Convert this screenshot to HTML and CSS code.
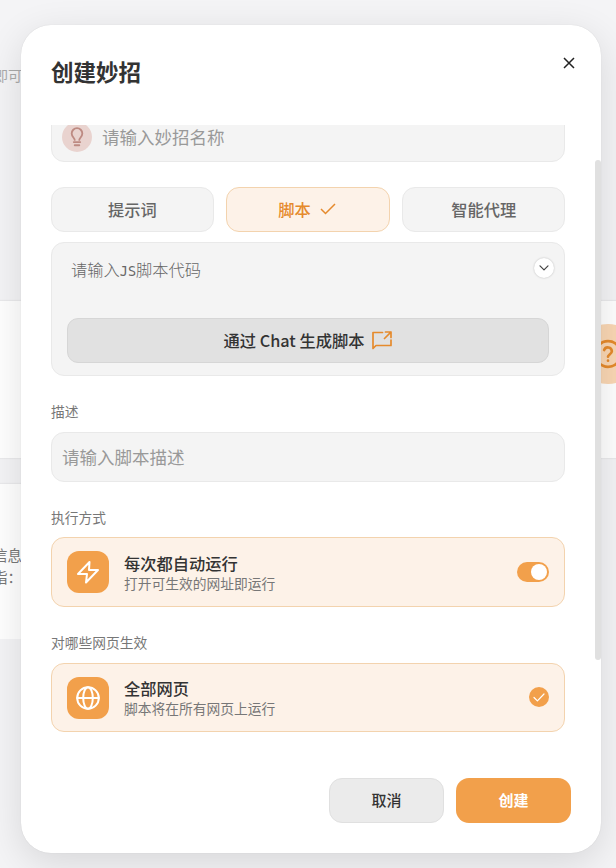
FILE: index.html
```html
<!DOCTYPE html>
<html lang="zh-CN">
<head>
    <meta charset="UTF-8">
    <meta name="viewport" content="width=device-width, initial-scale=1.0">
    <title>创建妙招</title>
    <link rel="stylesheet" href="styles.css">
</head>
<body>

    <!-- page behind the dialog -->
    <div class="page">
        <p class="page-intro">即可</p>
        <div class="page-columns">
            <div class="page-column">
                <div class="page-card"></div>
                <div class="page-card page-card-text">
                    <p>信息</p>
                    <p>指：</p>
                </div>
            </div>
            <div class="page-column">
                <div class="page-card page-card-help">
                    <span class="help-icon">
                        <svg width="32" height="32" viewBox="0 0 24 24"><circle cx="12" cy="12" r="9.600"/><path d="M9.100 9a3 3 0 0 1 5.800 1c0 2-2.900 2.600-2.900 4"/><path d="M12 17h.01"/></svg>
                    </span>
                </div>
            </div>
        </div>
    </div>

    <div class="modal">
        <div class="modal-header">
            <h1>创建妙招</h1>
            <button class="close">
                <svg width="12" height="12" viewBox="0 0 12 12"><path d="M1 1l10 10M11 1L1 11"/></svg>
            </button>
        </div>

        <div class="modal-body">
            <div class="field field-name">
                <span class="bulb">
                    <svg width="22" height="22" viewBox="0 0 24 24"><path d="M9.500 15.200c0-2-3.300-3.200-3.300-7A5.800 5.800 0 0 1 17.800 8.200c0 3.800-3.300 5-3.300 7"/><path d="M8.500 17.500h7M9.500 21h5"/></svg>
                </span>
                <span>请输入妙招名称</span>
            </div>

            <div class="tabs">
                <button class="tab">提示词</button>
                <button class="tab active">脚本
                    <svg width="16" height="12" viewBox="0 0 16 12"><path d="M1 6l4.500 4.500L15 1"/></svg>
                </button>
                <button class="tab">智能代理</button>
            </div>

            <div class="script-box">
                <div class="script-top">
                    <span class="script-placeholder">请输入<code>JS</code>脚本代码</span>
                    <button class="expand">
                        <svg width="10" height="6" viewBox="0 0 10 6"><path d="M1 .8l4 4 4-4"/></svg>
                    </button>
                </div>
                <button class="chat-button">通过 Chat 生成脚本
                    <svg width="20" height="19" viewBox="0 0 20 19"><path d="M10.500 1.500H1v16l3-3h15V9"/><path d="M13.500 1H19v5.500M19 1l-6.500 6.500"/></svg>
                </button>
            </div>

            <p class="label label-desc">描述</p>
            <div class="field">请输入脚本描述</div>

            <p class="label">执行方式</p>
            <div class="option option-run">
                <span class="option-icon">
                    <svg width="24" height="24" viewBox="0 0 24 24"><path d="M13.500 2L2 14h9l-1 8.500L22 10h-9z"/></svg>
                </span>
                <div class="option-text">
                    <h3>每次都自动运行</h3>
                    <p>打开可生效的网址即运行</p>
                </div>
                <span class="switch"></span>
            </div>

            <p class="label label-pages">对哪些网页生效</p>
            <div class="option">
                <span class="option-icon">
                    <svg width="24" height="24" viewBox="0 0 24 24"><circle cx="12" cy="12" r="10.800"/><ellipse cx="12" cy="12" rx="4.800" ry="10.800"/><path d="M1.200 12h21.600"/></svg>
                </span>
                <div class="option-text">
                    <h3>全部网页</h3>
                    <p>脚本将在所有网页上运行</p>
                </div>
                <span class="checked">
                    <svg width="12" height="9" viewBox="0 0 12 9"><path d="M1 4.500l3.400 3.400L11 1"/></svg>
                </span>
            </div>
        </div>

        <div class="modal-footer">
            <button class="cancel">取消</button>
            <button class="create">创建</button>
        </div>

        <div class="scrollbar"></div>
    </div>

</body>
</html>
```
FILE: styles.css
```css
* {
    padding: 0;
    margin: 0;
    box-sizing: border-box;
}

body {
    width: 616px;
    height: 868px;
    overflow: hidden;
    position: relative;
    background-color: #f4f4f6;
    color: #333;
    font-family: "Noto Sans CJK SC", sans-serif;
}

button {
    font-family: inherit;
    cursor: pointer;
}

svg {
    display: block;
    flex-shrink: 0;
    fill: none;
    stroke: currentColor;
    stroke-width: 2;
    stroke-linecap: round;
    stroke-linejoin: round;
}

/* background page */
.page {
    padding-top: 65px;
    overflow: hidden;
}

.page-intro {
    height: 236px;
    margin-left: -6px;
    font-size: 14px;
    line-height: 20px;
    color: #aaa;
}

.page-columns {
    display: flex;
    gap: 20px;
    margin: 0 -60px;
}

.page-column {
    flex: 1;
    display: flex;
    flex-direction: column;
    gap: 26px;
}

.page-card {
    height: 157px;
    background-color: #fff;
    box-shadow: 0 0 2px rgba(0, 0, 0, 0.12);
}

.page-card-text {
    height: 155px;
    padding: 60px 0 0 53px;
    font-size: 14.5px;
    line-height: 22px;
    color: #777;
}

.page-card-help {
    display: flex;
    justify-content: flex-end;
    padding: 23px 38px 0 0;
}

.help-icon {
    width: 60px;
    height: 60px;
    border-radius: 50%;
    display: flex;
    align-items: center;
    justify-content: center;
    background-color: #fad7b4;
    color: #e58a2c;
}

/* dialog */
.modal {
    position: absolute;
    top: 25px;
    left: 21px;
    width: 580px;
    height: 828px;
    border-radius: 30px;
    background-color: #fff;
    box-shadow: 0 0 1px rgba(0, 0, 0, 0.15), 0 10px 38px rgba(0, 0, 0, 0.12);
    display: flex;
    flex-direction: column;
}

.modal-header {
    height: 100px;
    flex-shrink: 0;
    padding: 29px 26px 0 30px;
    display: flex;
    justify-content: space-between;
    align-items: flex-start;
}

.modal-header h1 {
    font-size: 22.5px;
    line-height: 35px;
    font-weight: 700;
}

.close {
    margin-top: 3px;
    border: none;
    background: none;
    color: #222;
}

.close svg {
    stroke-width: 1.5;
    stroke-linecap: butt;
}

.modal-body {
    height: 608px;
    flex-shrink: 0;
    padding: 0 36px 0 30px;
    overflow: hidden;
}

.field {
    height: 50px;
    border: 1px solid #e9e9e9;
    border-radius: 13px;
    background-color: #f4f4f4;
    padding: 0 10px 2px;
    display: flex;
    align-items: center;
    gap: 10px;
    font-size: 17.5px;
    color: #999;
}

/* scrolled partly under the header */
.field-name {
    margin-top: -13px;
}

.bulb {
    width: 30px;
    height: 30px;
    margin-top: 2px;
    border-radius: 50%;
    display: flex;
    align-items: center;
    justify-content: center;
    background-color: #e9d3cf;
    color: #bd8a82;
}

.tabs {
    display: flex;
    gap: 12px;
    margin-top: 25px;
}

.tab {
    flex: 1;
    height: 45px;
    padding-bottom: 2px;
    border: 1px solid #e9e9e9;
    border-radius: 13px;
    background-color: #f4f4f4;
    display: flex;
    align-items: center;
    justify-content: center;
    gap: 9px;
    font-size: 16.25px;
    font-weight: 500;
    color: #666;
}

.tab.active {
    padding-right: 2px;
    border-color: #f3d3ae;
    background-color: #fdf2e8;
    color: #e58a2c;
}

.tab svg {
    stroke-width: 1.5;
    stroke-linecap: butt;
    stroke-linejoin: miter;
}

.script-box {
    height: 134px;
    margin-top: 10px;
    padding: 15px;
    border: 1px solid #e9e9e9;
    border-radius: 13px;
    background-color: #f4f4f4;
}

.script-top {
    height: 60px;
    display: flex;
    justify-content: space-between;
    align-items: flex-start;
}

.script-placeholder {
    margin: -1px 0 0 4px;
    font-size: 16.25px;
    font-weight: 300;
    line-height: 24px;
    color: #666;
}

.script-placeholder code {
    font-family: "DejaVu Sans Mono", monospace;
    font-size: 13.5px;
    line-height: 1;
}

.expand {
    width: 20px;
    height: 20px;
    margin-right: -5px;
    border: none;
    border-radius: 50%;
    display: flex;
    align-items: center;
    justify-content: center;
    background-color: #fff;
    box-shadow: 0 0 2px rgba(0, 0, 0, 0.25);
    color: #444;
}

.expand svg {
    stroke-width: 1.2;
}

.chat-button {
    width: 100%;
    height: 45px;
    padding-bottom: 2px;
    border: 1px solid #d6d6d6;
    border-radius: 11px;
    background-color: #e1e1e1;
    display: flex;
    align-items: center;
    justify-content: center;
    gap: 8px;
    font-size: 16.25px;
    font-weight: 500;
    color: #333;
}

.chat-button svg {
    margin-top: 2px;
    color: #e58a2c;
    stroke-width: 1.7;
}

.label {
    margin-top: 25px;
    padding-bottom: 10px;
    font-size: 13.75px;
    line-height: 20px;
    color: #777;
}

.label-desc,
.label-pages {
    padding-bottom: 11px;
}

.option {
    height: 69px;
    border: 1px solid #f3d3ae;
    border-radius: 13px;
    background-color: #fdf2e8;
    padding: 0 15px;
    display: flex;
    align-items: center;
}

.option-run {
    height: 70px;
}

.option-run .option-text {
    padding-top: 1px;
}

.option-icon {
    width: 42px;
    height: 42px;
    margin-right: 15px;
    border-radius: 12px;
    display: flex;
    align-items: center;
    justify-content: center;
    background-color: #f2a04b;
    color: #fff;
}

.option-text {
    flex: 1;
}

.option-text h3 {
    font-size: 16.25px;
    line-height: 20px;
    font-weight: 500;
}

.option-text p {
    font-size: 13.75px;
    line-height: 20px;
    color: #777;
}

.switch {
    width: 32px;
    height: 20px;
    border-radius: 10px;
    padding: 2px 2px 2px 14px;
    background-color: #f2a04b;
}

.switch::after {
    content: "";
    display: block;
    width: 16px;
    height: 16px;
    border-radius: 50%;
    background-color: #fff;
}

.checked {
    width: 20px;
    height: 20px;
    margin-bottom: 1px;
    border-radius: 50%;
    display: flex;
    align-items: center;
    justify-content: center;
    background-color: #f2a04b;
    color: #fff;
}

.checked svg {
    stroke-width: 1.2;
}

.modal-footer {
    display: flex;
    justify-content: flex-end;
    gap: 12px;
    padding: 45px 30px 0 0;
}

.modal-footer button {
    width: 115px;
    height: 45px;
    padding-bottom: 2px;
    border: none;
    border-radius: 13px;
    font-size: 15px;
    font-weight: 500;
}

.modal-footer .cancel {
    border: 1px solid #e0e0e0;
    background-color: #ebebeb;
    color: #333;
}

.modal-footer .create {
    background-color: #f2a04b;
    color: #fff;
    font-weight: 700;
}

.scrollbar {
    position: absolute;
    top: 135px;
    right: 0;
    width: 6px;
    height: 500px;
    border-radius: 3px;
    background-color: #e0e0e0;
}
```
